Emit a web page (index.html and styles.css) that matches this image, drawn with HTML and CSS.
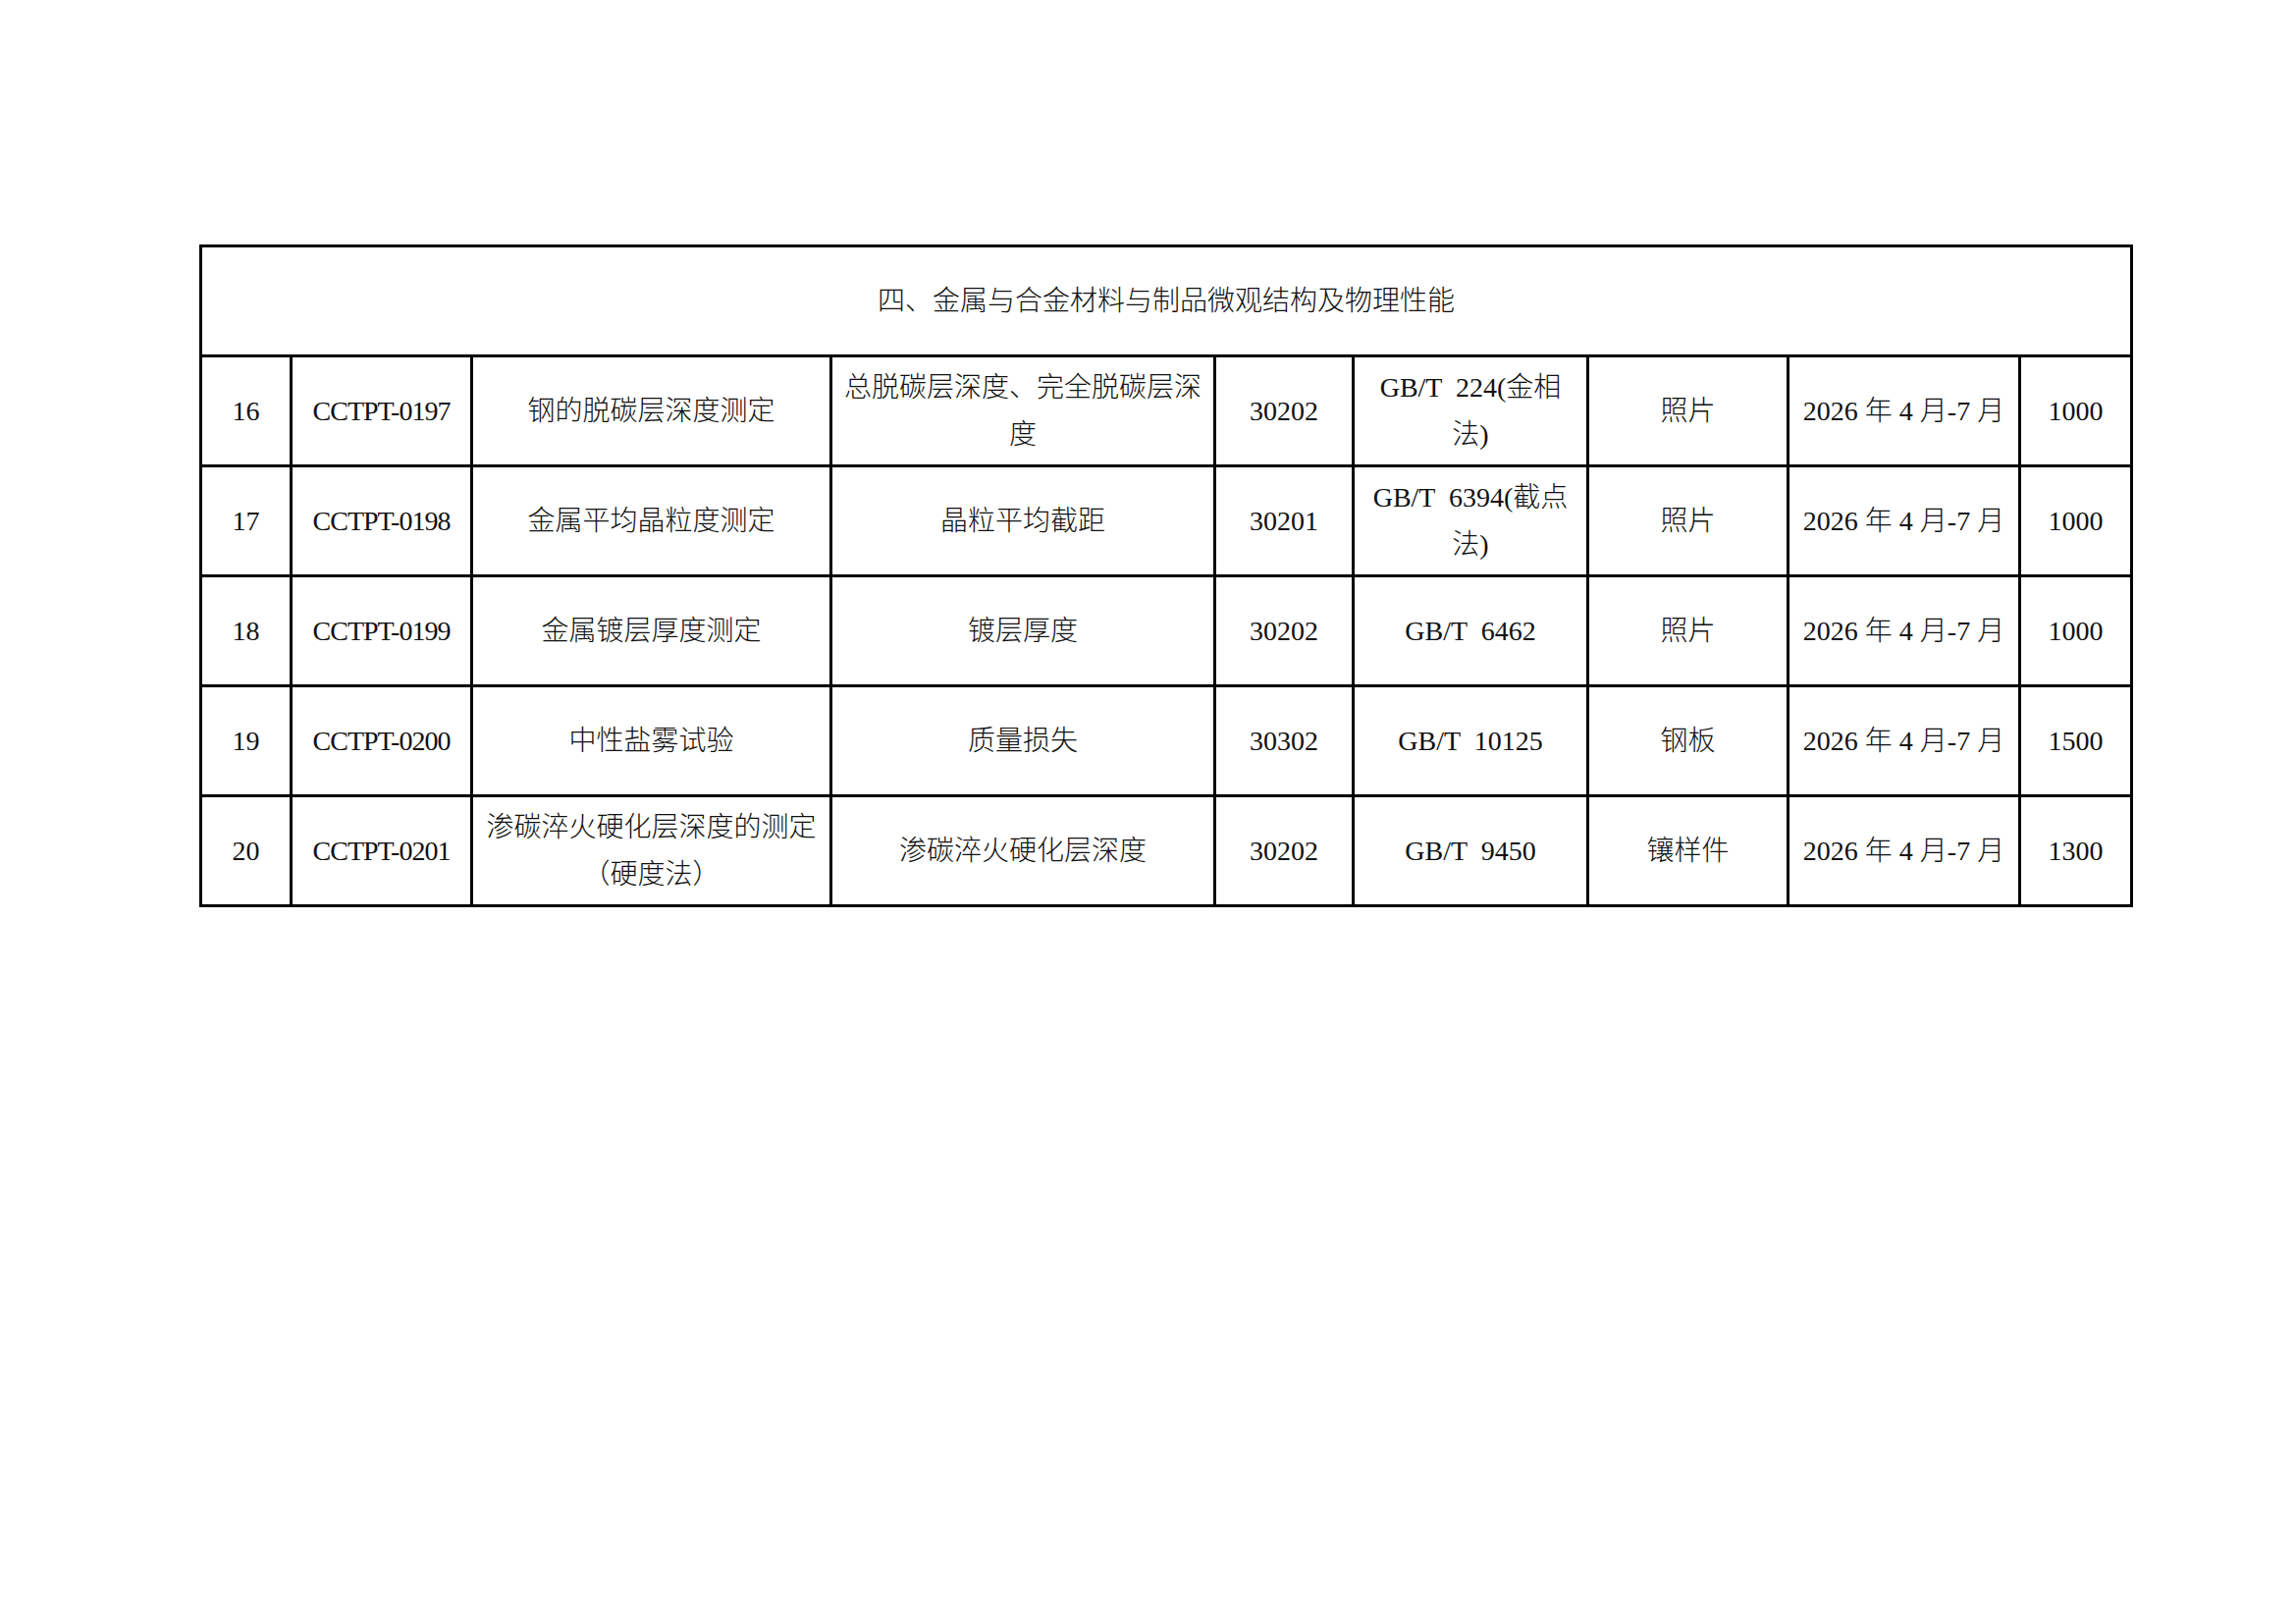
FILE: index.html
```html
<!DOCTYPE html>
<html lang="zh-CN">
<head>
<meta charset="utf-8">
<title>四、金属与合金材料与制品微观结构及物理性能</title>
<link rel="stylesheet" href="styles.css">
</head>
<body>
<main class="page">
  <div class="sheet">
    <div class="cell title">四、金属与合金材料与制品微观结构及物理性能</div>

    <div class="cell">16</div>
    <div class="cell code">CCTPT-0197</div>
    <div class="cell">钢的脱碳层深度测定</div>
    <div class="cell">总脱碳层深度、完全脱碳层深<br>度</div>
    <div class="cell">30202</div>
    <div class="cell std">GB/T 224(金相<br>法)</div>
    <div class="cell">照片</div>
    <div class="cell">2026 年 4 月-7 月</div>
    <div class="cell">1000</div>

    <div class="cell">17</div>
    <div class="cell code">CCTPT-0198</div>
    <div class="cell">金属平均晶粒度测定</div>
    <div class="cell">晶粒平均截距</div>
    <div class="cell">30201</div>
    <div class="cell std">GB/T 6394(截点<br>法)</div>
    <div class="cell">照片</div>
    <div class="cell">2026 年 4 月-7 月</div>
    <div class="cell">1000</div>

    <div class="cell">18</div>
    <div class="cell code">CCTPT-0199</div>
    <div class="cell">金属镀层厚度测定</div>
    <div class="cell">镀层厚度</div>
    <div class="cell">30202</div>
    <div class="cell std">GB/T 6462</div>
    <div class="cell">照片</div>
    <div class="cell">2026 年 4 月-7 月</div>
    <div class="cell">1000</div>

    <div class="cell">19</div>
    <div class="cell code">CCTPT-0200</div>
    <div class="cell">中性盐雾试验</div>
    <div class="cell">质量损失</div>
    <div class="cell">30302</div>
    <div class="cell std">GB/T 10125</div>
    <div class="cell">钢板</div>
    <div class="cell">2026 年 4 月-7 月</div>
    <div class="cell">1500</div>

    <div class="cell">20</div>
    <div class="cell code">CCTPT-0201</div>
    <div class="cell">渗碳淬火硬化层深度的测定<br>（硬度法）</div>
    <div class="cell">渗碳淬火硬化层深度</div>
    <div class="cell">30202</div>
    <div class="cell std">GB/T 9450</div>
    <div class="cell">镶样件</div>
    <div class="cell">2026 年 4 月-7 月</div>
    <div class="cell">1300</div>
  </div>
</main>
</body>
</html>
```

FILE: styles.css
```css
html, body {
  margin: 0;
  padding: 0;
  background: #ffffff;
}

body {
  width: 2339px;
  min-height: 1654px;
  font-family: "Liberation Serif", "Noto Sans CJK SC", serif;
  font-size: 28px;
  color: #111111;
}

.page {
  padding: 249px 0 0 203px;
}

.sheet {
  display: grid;
  grid-template-columns: 92px 184px 366px 391px 141px 239px 204px 236px 114px;
  grid-auto-rows: 112px;
  width: max-content;
  border-top: 3px solid #000;
  border-left: 3px solid #000;
}

.cell {
  box-sizing: border-box;
  display: flex;
  align-items: center;
  justify-content: center;
  text-align: center;
  line-height: 48px;
  padding: 0 6px;
  border-right: 3px solid #000;
  border-bottom: 3px solid #000;
  font-weight: 300;
  white-space: nowrap;
}

.title {
  grid-column: 1 / -1;
}

.code {
  letter-spacing: -1px;
}

.std {
  word-spacing: 7px;
}
```
